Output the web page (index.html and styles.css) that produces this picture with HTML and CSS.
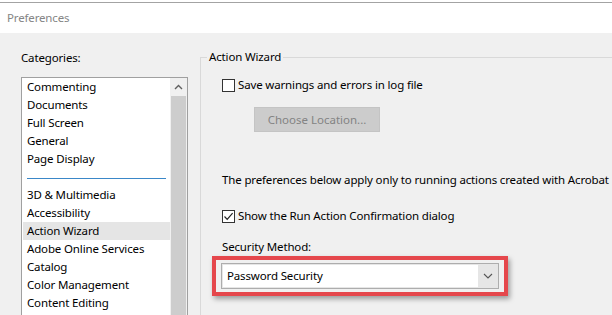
FILE: index.html
```html
<!DOCTYPE html>
<html lang="en">
<head>
    <meta charset="UTF-8" />
    <title>Preferences</title>
    <link rel="stylesheet" href="styles.css">
</head>
<body>
    <div class="window-edge"></div>
    <div class="title-bar">Preferences</div>
    <div class="dialog">
        <div class="categories">
            <div class="label">Categories:</div>
            <div class="list-box">
                <ul class="list-items">
                    <li>Commenting</li>
                    <li>Documents</li>
                    <li>Full Screen</li>
                    <li>General</li>
                    <li>Page Display</li>
                    <li class="separator"><span></span></li>
                    <li>3D &amp; Multimedia</li>
                    <li>Accessibility</li>
                    <li class="selected">Action Wizard</li>
                    <li>Adobe Online Services</li>
                    <li>Catalog</li>
                    <li>Color Management</li>
                    <li>Content Editing</li>
                </ul>
                <div class="scrollbar">
                    <div class="scroll-up">
                        <svg width="9" height="6" viewBox="0 0 9 6"><path d="M1 5 L4.5 1.5 L8 5" fill="none" stroke="#606060" stroke-width="1.4"/></svg>
                    </div>
                    <div class="scroll-thumb"></div>
                </div>
            </div>
        </div>

        <fieldset class="group">
            <legend>Action Wizard</legend>
            <div class="group-body">
                <div class="check-row">
                    <span class="check-box"></span>
                    <span>Save warnings and errors in log file</span>
                </div>
                <button class="choose-button" disabled>Choose Location...</button>
                <p class="note">The preferences below apply only to running actions created with Acrobat</p>
                <div class="check-row second">
                    <span class="check-box">
                        <svg width="11" height="11" viewBox="0 0 11 11"><path d="M1.5 5.5 L4.2 8.3 L9.6 2.2" fill="none" stroke="#222" stroke-width="1.2"/></svg>
                    </span>
                    <span>Show the Run Action Confirmation dialog</span>
                </div>
                <div class="field-label">Security Method:</div>
                <div class="highlight">
                    <div class="combo">
                        <div class="combo-value">Password Security</div>
                        <div class="combo-arrow">
                            <svg width="10" height="6" viewBox="0 0 10 6"><path d="M1 1 L5 5 L9 1" fill="none" stroke="#555" stroke-width="1.1"/></svg>
                        </div>
                    </div>
                </div>
            </div>
        </fieldset>
    </div>
</body>
</html>
```

FILE: styles.css
```css
/* Window */
body {
    margin: 0;
    font-family: 'Noto Sans', 'Open Sans', Arial, sans-serif;
    font-size: 11.5px;
    letter-spacing: -0.15px;
    line-height: 18px;
    color: #000;
    background: #f0f0f0;
    width: 612px;
    height: 315px;
    overflow: hidden;
}

.window-edge {
    height: 2px;
    background: #ffffff;
    border-bottom: 1px solid #a3a3a3;
}

.title-bar {
    height: 30px;
    line-height: 30px;
    background: #ffffff;
    color: #858585;
    padding-left: 7px;
}

.dialog {
    display: flex;
    align-items: flex-start;
}

/* Categories list */
.categories {
    padding: 16px 0 0 21px;
    width: 167px;
}

.label {
    margin-bottom: 10px;
}

.list-box {
    display: flex;
    height: 300px;
    background: #ffffff;
    border: 1px solid #a0a0a0;
}

.list-items {
    list-style: none;
    margin: 0;
    padding: 0 0 0 1px;
    flex: 1;
}

.list-items li {
    height: 18px;
    padding-left: 4px;
    white-space: nowrap;
}

.list-items li.selected {
    background: #e5e5e5;
}

.list-items li.separator {
    height: 8px;
    padding-top: 10px;
}

.list-items li.separator span {
    display: block;
    margin-right: 4px;
    height: 1px;
    background: #3a87c8;
}

.scrollbar {
    width: 17px;
    display: flex;
    flex-direction: column;
    background: #f0f0f0;
}

.scroll-up {
    height: 17px;
    display: flex;
    align-items: center;
    justify-content: center;
}

.scroll-thumb {
    flex: 1;
    background: #cdcdcd;
    margin: 1px 1px 0 1px;
}

/* Action Wizard group */
.group {
    margin: 15px 0 0 12px;
    padding: 0 0 0 6px;
    border: 1px solid #d9d9d9;
    border-right: none;
    height: 300px;
    flex: 1;
    min-width: 0;
}

.group legend {
    padding: 0 2px;
}

.group-body {
    padding: 10px 0 0 15px;
}

.check-row {
    display: flex;
    align-items: center;
    gap: 3px;
    white-space: nowrap;
}

.check-row.second {
    margin-top: 18px;
}

.check-box {
    width: 11px;
    height: 11px;
    border: 1px solid #333;
    background: #ffffff;
    display: flex;
    align-items: center;
    justify-content: center;
}

.choose-button {
    display: block;
    margin: 13px 0 0 32px;
    width: 126px;
    height: 25px;
    font: inherit;
    color: #838383;
    background: #cccccc;
    border: 1px solid #c4c4c4;
}

.note {
    margin: 39px 0 0 0;
    white-space: nowrap;
}

.field-label {
    margin-top: 13px;
}

/* Red highlight around the combo box */
.highlight {
    margin-left: -10px;
    width: 278px;
    padding: 3px 5px;
    border: 4px solid #e5474c;
    box-shadow: 2px 3px 5px rgba(0, 0, 0, 0.35);
}

.combo {
    box-sizing: border-box;
    display: flex;
    height: 26px;
    width: 278px;
    padding: 1px;
    border: 1px solid #adadad;
    background: #e6e6e6;
}

.combo-value {
    flex: 1;
    background: #ffffff;
    line-height: 22px;
    padding-left: 4px;
}

.combo-arrow {
    width: 19px;
    display: flex;
    align-items: center;
    justify-content: center;
}
```
